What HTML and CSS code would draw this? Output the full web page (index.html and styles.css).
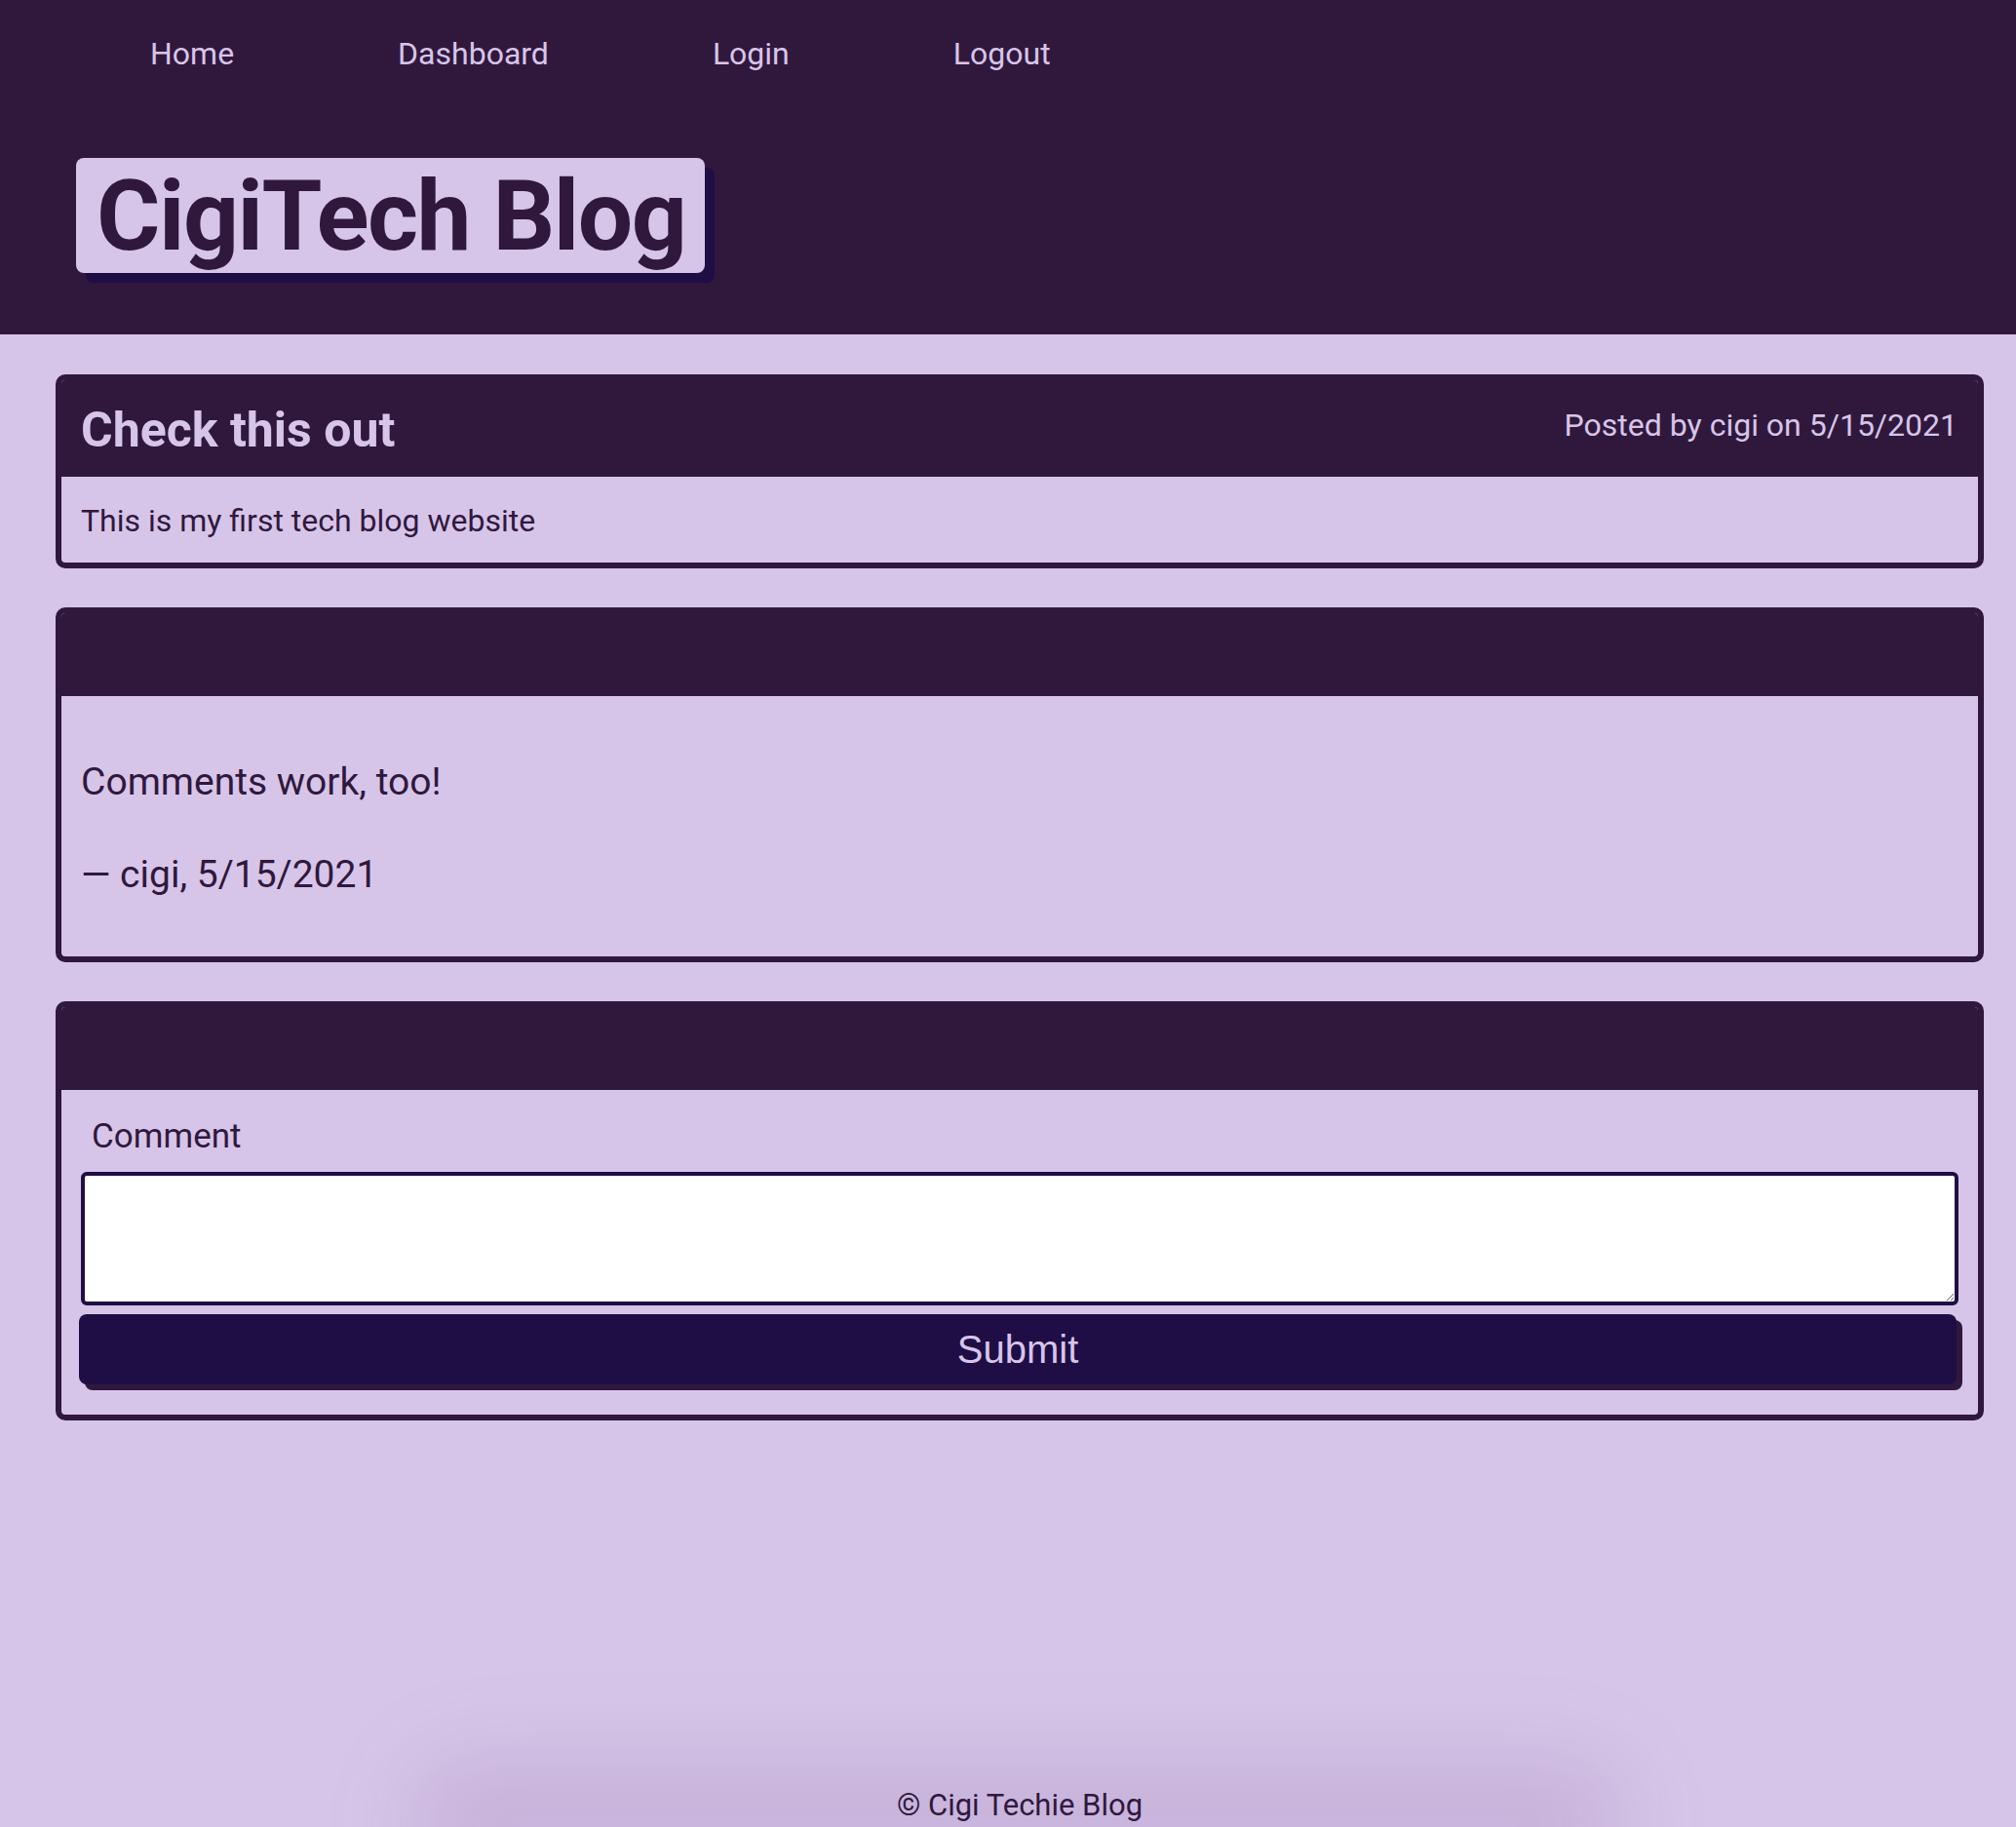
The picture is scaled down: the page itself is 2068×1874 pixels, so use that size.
FILE: index.html
```html
<!DOCTYPE html>
<html lang="en">
<head>
<meta charset="utf-8">
<title>CigiTech Blog</title>
<link rel="stylesheet" href="styles.css">
</head>
<body>
<div class="page">
  <header class="site-header">
    <nav class="nav">
      <a href="#">Home</a>
      <a href="#">Dashboard</a>
      <a href="#">Login</a>
      <a href="#">Logout</a>
    </nav>
    <h1 class="brand">CigiTech Blog</h1>
  </header>
  <main class="main">
    <article class="card">
      <div class="card-head post-head">
        <h2 class="post-title">Check this out</h2>
        <p class="post-meta">Posted by cigi on 5/15/2021</p>
      </div>
      <div class="post-body">
        <p>This is my first tech blog website</p>
      </div>
    </article>
    <section class="card">
      <div class="card-head empty-head"></div>
      <div class="comment-body">
        <p>Comments work, too!</p>
        <p>— cigi, 5/15/2021</p>
      </div>
    </section>
    <section class="card">
      <div class="card-head empty-head"></div>
      <form class="comment-form">
        <label for="comment">Comment</label>
        <textarea id="comment" name="comment"></textarea>
        <button type="button">Submit</button>
      </form>
    </section>
  </main>
  <footer class="footer"><span>© Cigi Techie Blog</span></footer>
</div>
</body>
</html>
```

FILE: styles.css
```css
* { box-sizing: border-box; }
html, body { margin: 0; padding: 0; }
body {
  background: #d7c5e9;
  color: #30183d;
  font-family: Roboto, "Liberation Sans", Arial, sans-serif;
  overflow: hidden;
}
.page {
  min-height: 100vh;
  display: flex;
  flex-direction: column;
}
.site-header {
  background: #30183d;
  display: flex;
  flex-direction: column;
  align-items: flex-start;
  padding: 36px 0 63px;
}
.nav {
  display: flex;
  gap: 168px;
  padding-left: 154px;
}
.nav a {
  color: #d7c5e9;
  text-decoration: none;
  font-size: 32px;
  line-height: normal;
}
.brand {
  margin: 88px 0 0 78px;
  padding: 2px 20px 0 21px;
  font-size: 100px;
  line-height: 116px;
  font-weight: 700;
  letter-spacing: -1.5px;
  background: #d7c5e9;
  color: #30183d;
  border-radius: 8px;
  box-shadow: 10px 10px 0 #1f0e45;
}
.main {
  display: flex;
  flex-direction: column;
  gap: 40px;
  padding: 41px 33px 0 57px;
}
.card {
  border: 6px solid #30183d;
  border-radius: 10px;
  background: #d7c5e9;
  overflow: hidden;
}
.card-head {
  background: #30183d;
  color: #d7c5e9;
}
.post-head {
  display: flex;
  justify-content: space-between;
  align-items: flex-start;
  padding: 22px 21px 19px 20px;
}
.post-title {
  margin: 0;
  font-size: 50px;
  font-weight: 700;
  line-height: normal;
}
.post-meta {
  margin: 5px 0 0;
  font-size: 32px;
  line-height: normal;
}
.post-body {
  padding: 26px 20px 24px;
  font-size: 32px;
}
.post-body p { margin: 0; }
.empty-head { height: 85px; }
.comment-body {
  display: flex;
  flex-direction: column;
  gap: 49px;
  padding: 65px 20px 61px;
  font-size: 39px;
}
.comment-body p { margin: 0; line-height: normal; }
.comment-form {
  display: flex;
  flex-direction: column;
  align-items: stretch;
  padding: 27px 20px 31px;
}
.comment-form label {
  font-size: 35px;
  line-height: normal;
  padding-left: 11px;
}
.comment-form textarea {
  display: block;
  margin-top: 16px;
  height: 137px;
  width: 100%;
  border: 4px solid #1f0e45;
  border-radius: 6px;
  background: #fff;
  font: inherit;
  font-size: 24px;
}
.comment-form button {
  margin: 9px 2px 0 -2px;
  height: 72px;
  background: #1f0e45;
  color: #d7c5e9;
  border: 0;
  border-radius: 8px;
  box-shadow: 6px 6px 0 #30183d;
  font-family: "Liberation Sans", Arial, sans-serif;
  font-size: 40px;
}
.footer {
  margin-top: auto;
  position: relative;
  overflow: hidden;
  padding: 140px 33px 4px 57px;
  text-align: center;
  font-size: 31px;
  line-height: normal;
}
.footer::before {
  content: "";
  position: absolute;
  left: 420px;
  right: 400px;
  bottom: -60px;
  height: 130px;
  background: rgba(70, 30, 100, 0.11);
  filter: blur(45px);
  border-radius: 60px;
}
.footer span {
  position: relative;
}
```
